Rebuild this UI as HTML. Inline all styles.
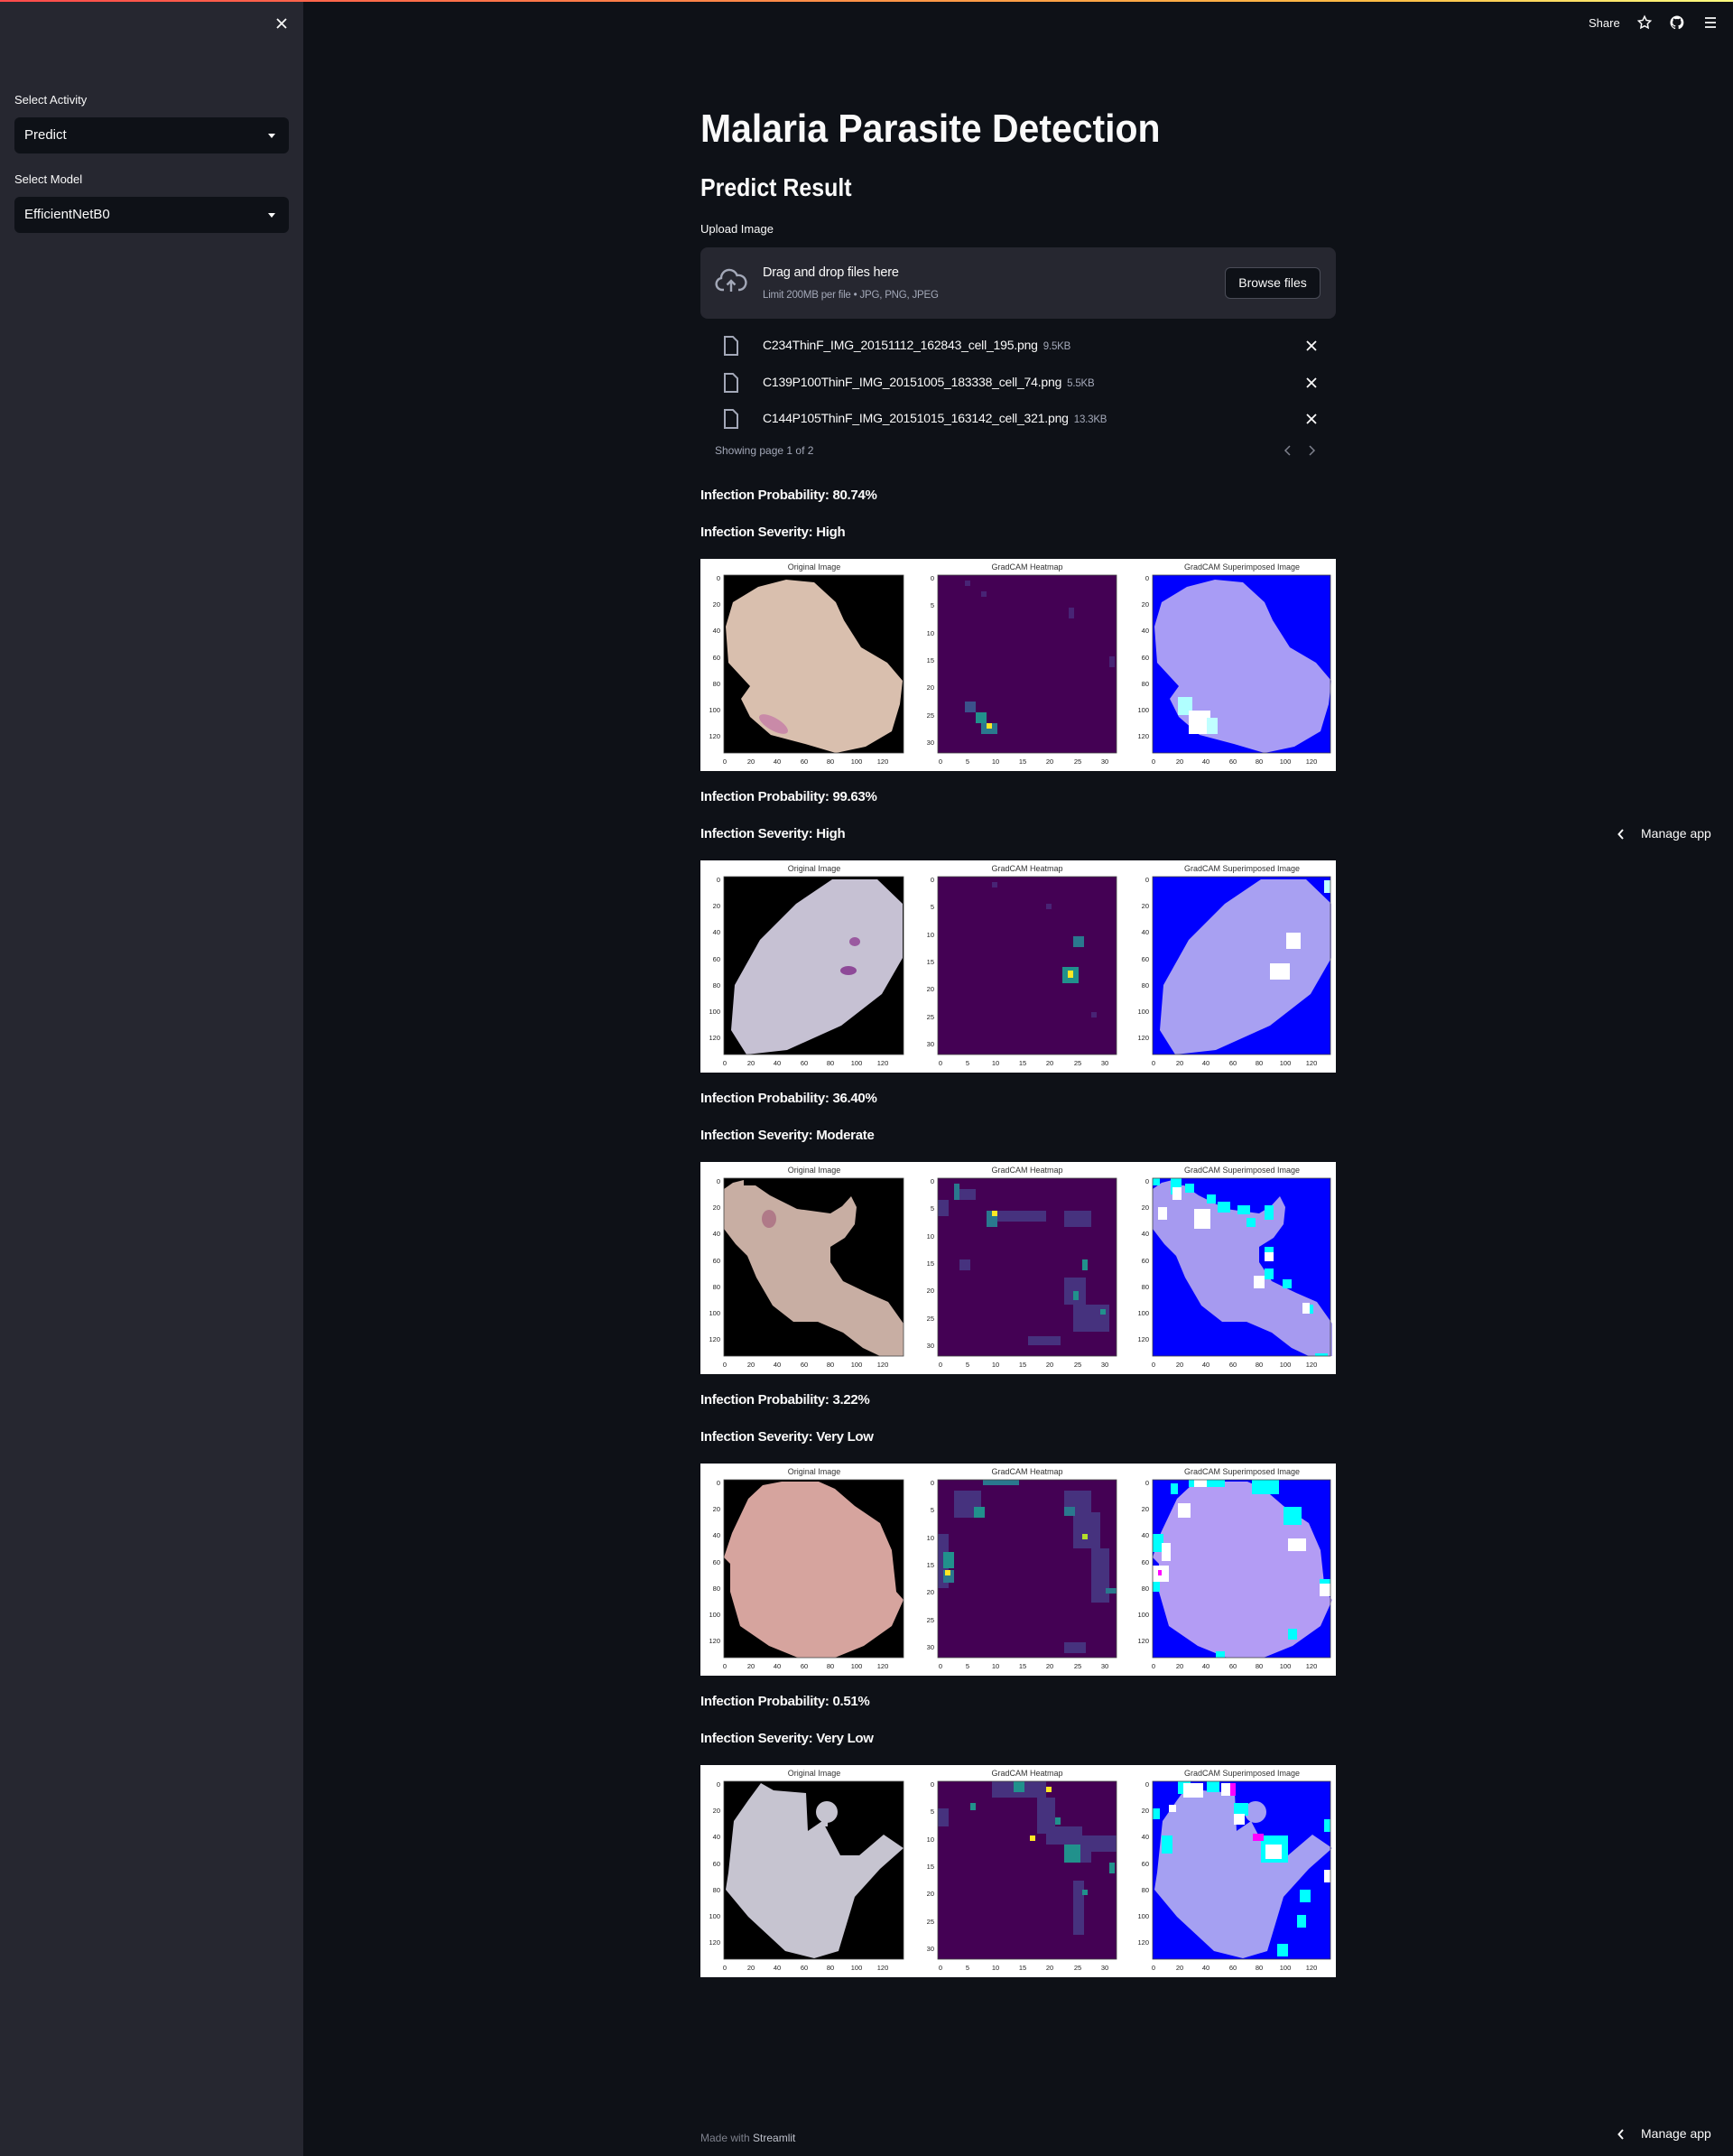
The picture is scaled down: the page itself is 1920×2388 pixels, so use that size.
<!DOCTYPE html>
<html><head><meta charset="utf-8">
<style>
*{margin:0;padding:0;box-sizing:border-box}
body{width:1920px;height:2388px;background:#0e1117;font-family:"Liberation Sans",sans-serif;color:#fafafa;position:relative;overflow:hidden}
.abs{position:absolute}
.bar{left:0;top:0;width:1920px;height:2px;background:linear-gradient(90deg,#ff4b4b,#ffbd45 80%,#fffd80)}
.side{left:0;top:2px;width:336px;height:2386px;background:#262730}
.lbl{font-size:13px;color:#fafafa}
.sel{left:16px;width:304px;height:40px;background:#0e1117;border-radius:6px;font-size:15px;padding-left:11px;line-height:40px}
.sel:after{content:"";position:absolute;right:15px;top:18px;border-left:4px solid transparent;border-right:4px solid transparent;border-top:5px solid #fafafa}
.sx{display:inline-block;transform-origin:0 0;white-space:nowrap}
.b{font-weight:bold;font-size:15px;letter-spacing:-0.3px}
.fn{font-size:14px;color:#fafafa;letter-spacing:-0.2px}
.fs{font-size:11.5px;color:#a3a8b8;margin-left:6px}
svg text{font-family:"Liberation Sans",sans-serif}
.tk text{font-size:7.5px;fill:#222}
</style></head><body>
<div class="abs bar"></div>
<div class="abs side"></div>
<svg class="abs" style="left:305px;top:19px" width="14" height="14" viewBox="0 0 14 14"><path d="M2 2L12 12M12 2L2 12" stroke="#fafafa" stroke-width="1.8"/></svg>
<div class="abs lbl" style="left:16px;top:103px">Select Activity</div>
<div class="abs sel" style="top:130px">Predict</div>
<div class="abs lbl" style="left:16px;top:191px">Select Model</div>
<div class="abs sel" style="top:218px">EfficientNetB0</div>

<!-- header -->
<div class="abs" style="left:1760px;top:18px;font-size:13px">Share</div>
<svg class="abs" style="left:1813px;top:16px" width="18" height="18" viewBox="0 0 24 24"><path d="M12 3l2.7 5.6 6.1.9-4.4 4.3 1 6.1L12 17l-5.4 2.9 1-6.1-4.4-4.3 6.1-.9z" fill="none" stroke="#fafafa" stroke-width="2"/></svg>
<svg class="abs" style="left:1849px;top:16px" width="18" height="18" viewBox="0 0 24 24"><path d="M12 2a10 10 0 0 0-3.2 19.5c.5.1.7-.2.7-.5v-1.7c-2.8.6-3.4-1.3-3.4-1.3-.5-1.2-1.100-1.5-1.100-1.5-.9-.6.1-.6.1-.6 1 .1 1.5 1 1.5 1 .9 1.5 2.3 1.100 2.9.8.1-.6.4-1.100.6-1.300-2.200-.3-4.600-1.100-4.600-5a3.9 3.9 0 0 1 1-2.700c-.1-.3-.4-1.300.1-2.700 0 0 .8-.3 2.700 1a9.4 9.4 0 0 1 5 0c1.900-1.300 2.700-1 2.700-1 .5 1.400.2 2.400.1 2.700a3.9 3.9 0 0 1 1 2.700c0 3.900-2.300 4.700-4.600 5 .4.3.7.9.7 1.900V21c0 .3.2.6.7.5A10 10 0 0 0 12 2z" fill="#fafafa"/></svg>
<svg class="abs" style="left:1887px;top:17px" width="16" height="16" viewBox="0 0 16 16"><path d="M2 3h12M2 8h12M2 13h12" stroke="#fafafa" stroke-width="1.8"/></svg>

<!-- main -->
<div class="abs sx" style="left:776px;top:118px;font-size:44px;font-weight:bold;transform:scaleX(0.93)">Malaria Parasite Detection</div>
<div class="abs sx" style="left:776px;top:192px;font-size:28px;font-weight:bold;transform:scaleX(0.89)">Predict Result</div>
<div class="abs lbl" style="left:776px;top:246px">Upload Image</div>

<div class="abs" style="left:776px;top:274px;width:704px;height:79px;background:#262730;border-radius:8px"></div>
<svg class="abs" style="left:792px;top:297px" width="36" height="30" viewBox="0 0 36 30"><path d="M10 24H8a6.5 6.5 0 0 1-1-12.9A9 9 0 0 1 24.5 8 7.5 7.5 0 0 1 28 24h-2" fill="none" stroke="#a3a8b8" stroke-width="2.4"/><path d="M18 26V14M13.5 18.5L18 14l4.5 4.5" fill="none" stroke="#a3a8b8" stroke-width="2.4"/></svg>
<div class="abs" style="left:845px;top:294px;font-size:14.5px;letter-spacing:-0.2px">Drag and drop files here</div>
<div class="abs" style="left:845px;top:321px;font-size:11.5px;color:#a3a8b8;letter-spacing:-0.2px">Limit 200MB per file • JPG, PNG, JPEG</div>
<div class="abs" style="left:1357px;top:296px;width:106px;height:35px;background:#0e1117;border:1px solid #4a4c57;border-radius:6px;font-size:14px;text-align:center;line-height:33px">Browse files</div>

<svg class="abs" style="left:801px;top:371px" width="18" height="24" viewBox="0 0 18 24"><path d="M2 2h9l5 5v15H2z" fill="none" stroke="#a3a8b8" stroke-width="2"/></svg>
<div class="abs fn" style="left:845px;top:374px">C234ThinF_IMG_20151112_162843_cell_195.png<span class="fs">9.5KB</span></div>
<svg class="abs" style="left:1446px;top:376px" width="14" height="14" viewBox="0 0 14 14"><path d="M2 2L12 12M12 2L2 12" stroke="#fafafa" stroke-width="1.8"/></svg>
<svg class="abs" style="left:801px;top:412px" width="18" height="24" viewBox="0 0 18 24"><path d="M2 2h9l5 5v15H2z" fill="none" stroke="#a3a8b8" stroke-width="2"/></svg>
<div class="abs fn" style="left:845px;top:415px">C139P100ThinF_IMG_20151005_183338_cell_74.png<span class="fs">5.5KB</span></div>
<svg class="abs" style="left:1446px;top:417px" width="14" height="14" viewBox="0 0 14 14"><path d="M2 2L12 12M12 2L2 12" stroke="#fafafa" stroke-width="1.8"/></svg>
<svg class="abs" style="left:801px;top:452px" width="18" height="24" viewBox="0 0 18 24"><path d="M2 2h9l5 5v15H2z" fill="none" stroke="#a3a8b8" stroke-width="2"/></svg>
<div class="abs fn" style="left:845px;top:455px">C144P105ThinF_IMG_20151015_163142_cell_321.png<span class="fs">13.3KB</span></div>
<svg class="abs" style="left:1446px;top:457px" width="14" height="14" viewBox="0 0 14 14"><path d="M2 2L12 12M12 2L2 12" stroke="#fafafa" stroke-width="1.8"/></svg>
<div class="abs" style="left:792px;top:492px;font-size:12px;color:#a3a8b8">Showing page 1 of 2</div>
<svg class="abs" style="left:1420px;top:492px" width="40" height="14" viewBox="0 0 40 14"><path d="M9 2L4 7l5 5M31 2l5 5-5 5" fill="none" stroke="#7d808c" stroke-width="1.5"/></svg>

<svg class="abs" style="left:1791px;top:917px" width="10" height="14" viewBox="0 0 10 14"><path d="M7 2L2.5 7 7 12" fill="none" stroke="#fafafa" stroke-width="2"/></svg>
<div class="abs" style="left:1818px;top:915px;font-size:14px">Manage app</div>
<svg class="abs" style="left:1791px;top:2357px" width="10" height="14" viewBox="0 0 10 14"><path d="M7 2L2.5 7 7 12" fill="none" stroke="#fafafa" stroke-width="2"/></svg>
<div class="abs" style="left:1818px;top:2355px;font-size:14px">Manage app</div>
<div class="abs" style="left:776px;top:2361px;font-size:12px;color:#7d808c">Made with <span style="color:#bfc2cc">Streamlit</span></div>

<!-- results -->
<div class="abs b" style="left:776px;top:540px">Infection Probability: 80.74%</div>
<div class="abs b" style="left:776px;top:581px">Infection Severity: High</div>
<div class="abs b" style="left:776px;top:874px">Infection Probability: 99.63%</div>
<div class="abs b" style="left:776px;top:915px">Infection Severity: High</div>
<div class="abs b" style="left:776px;top:1208px">Infection Probability: 36.40%</div>
<div class="abs b" style="left:776px;top:1249px">Infection Severity: Moderate</div>
<div class="abs b" style="left:776px;top:1542px">Infection Probability: 3.22%</div>
<div class="abs b" style="left:776px;top:1583px">Infection Severity: Very Low</div>
<div class="abs b" style="left:776px;top:1876px">Infection Probability: 0.51%</div>
<div class="abs b" style="left:776px;top:1917px">Infection Severity: Very Low</div>

<!-- FIG 1 -->
<svg class="abs" style="left:776px;top:619px" width="704" height="235" viewBox="0 0 704 235">
<rect width="704" height="235" fill="#fff"/>
<g font-size="9" fill="#333" text-anchor="middle"><text x="126" y="12">Original Image</text><text x="362" y="12">GradCAM Heatmap</text><text x="600" y="12">GradCAM Superimposed Image</text></g>
<g transform="translate(26,18)"><rect width="199" height="197" fill="#000"/><polygon fill="#d9bfae" points="69,5 100,8 124,30 133,50 152,80 181,97 198,117 195,143 186,173 157,190 124,197 90,187 52,177 29,157 19,137 29,123 5,97 2,57 10,30 38,13"/><ellipse cx="55" cy="165" rx="18" ry="7" fill="#c98aa8" transform="rotate(30 55 165)"/></g>
<g transform="translate(263,18)"><rect width="198" height="197" fill="#440154"/><g fill="#482475"><rect x="30" y="6" width="6" height="6"/><rect x="48" y="18" width="6" height="6"/><rect x="145" y="36" width="6" height="12"/><rect x="190" y="90" width="6" height="12"/></g><rect x="30" y="140" width="12" height="12" fill="#3b528b"/><rect x="42" y="152" width="12" height="12" fill="#21918c"/><rect x="48" y="164" width="18" height="12" fill="#2a788e"/><rect x="54" y="164" width="6" height="6" fill="#fde725"/></g>
<g transform="translate(501,18)"><rect width="197" height="197" fill="#0000ff"/><polygon fill="#a89cf5" points="69,5 100,8 124,30 133,50 152,80 181,97 198,117 195,143 186,173 157,190 124,197 90,187 52,177 29,157 19,137 29,123 5,97 2,57 10,30 38,13"/><rect x="28" y="135" width="16" height="20" fill="#b0ffff"/><rect x="40" y="150" width="24" height="26" fill="#ffffff"/><rect x="60" y="158" width="12" height="18" fill="#c0ffff"/></g>
<g fill="none" stroke="#444" stroke-width="0.8"><rect x="26" y="18" width="199" height="197"/><rect x="263" y="18" width="198" height="197"/><rect x="501" y="18" width="197" height="197"/></g>
<g class="tk" text-anchor="end"><text x="22" y="24">0</text><text x="22" y="53">20</text><text x="22" y="82">40</text><text x="22" y="112">60</text><text x="22" y="141">80</text><text x="22" y="170">100</text><text x="22" y="199">120</text>
<text x="259" y="24">0</text><text x="259" y="54">5</text><text x="259" y="85">10</text><text x="259" y="115">15</text><text x="259" y="145">20</text><text x="259" y="176">25</text><text x="259" y="206">30</text>
<text x="497" y="24">0</text><text x="497" y="53">20</text><text x="497" y="82">40</text><text x="497" y="112">60</text><text x="497" y="141">80</text><text x="497" y="170">100</text><text x="497" y="199">120</text></g>
<g class="tk" text-anchor="middle"><text x="27" y="227">0</text><text x="56" y="227">20</text><text x="85" y="227">40</text><text x="115" y="227">60</text><text x="144" y="227">80</text><text x="173" y="227">100</text><text x="202" y="227">120</text>
<text x="266" y="227">0</text><text x="296" y="227">5</text><text x="327" y="227">10</text><text x="357" y="227">15</text><text x="387" y="227">20</text><text x="418" y="227">25</text><text x="448" y="227">30</text>
<text x="502" y="227">0</text><text x="531" y="227">20</text><text x="560" y="227">40</text><text x="590" y="227">60</text><text x="619" y="227">80</text><text x="648" y="227">100</text><text x="677" y="227">120</text></g>
</svg>

<!-- FIG 2 -->
<svg class="abs" style="left:776px;top:953px" width="704" height="235" viewBox="0 0 704 235">
<rect width="704" height="235" fill="#fff"/>
<g font-size="9" fill="#333" text-anchor="middle"><text x="126" y="12">Original Image</text><text x="362" y="12">GradCAM Heatmap</text><text x="600" y="12">GradCAM Superimposed Image</text></g>
<g transform="translate(26,18)"><rect width="199" height="197" fill="#000"/><polygon fill="#c6c1d3" points="120,3 170,3 198,30 198,90 175,130 130,165 70,192 25,197 8,170 12,120 40,70 80,30"/><ellipse cx="145" cy="72" rx="6" ry="5" fill="#9a5aa0"/><ellipse cx="138" cy="104" rx="9" ry="5" fill="#8e4a98"/></g>
<g transform="translate(263,18)"><rect width="198" height="197" fill="#440154"/><g fill="#482475"><rect x="60" y="6" width="6" height="6"/><rect x="120" y="30" width="6" height="6"/><rect x="170" y="150" width="6" height="6"/></g><rect x="150" y="66" width="12" height="12" fill="#2a788e"/><rect x="138" y="100" width="18" height="18" fill="#21918c"/><rect x="144" y="104" width="6" height="8" fill="#fde725"/></g>
<g transform="translate(501,18)"><rect width="197" height="197" fill="#0000ff"/><polygon fill="#a8a0f2" points="120,3 170,3 198,30 198,90 175,130 130,165 70,192 25,197 8,170 12,120 40,70 80,30"/><rect x="148" y="62" width="16" height="18" fill="#fff"/><rect x="130" y="96" width="22" height="18" fill="#fff"/><rect x="190" y="4" width="7" height="14" fill="#bfffff"/></g>
<g fill="none" stroke="#444" stroke-width="0.8"><rect x="26" y="18" width="199" height="197"/><rect x="263" y="18" width="198" height="197"/><rect x="501" y="18" width="197" height="197"/></g>
<g class="tk" text-anchor="end"><text x="22" y="24">0</text><text x="22" y="53">20</text><text x="22" y="82">40</text><text x="22" y="112">60</text><text x="22" y="141">80</text><text x="22" y="170">100</text><text x="22" y="199">120</text>
<text x="259" y="24">0</text><text x="259" y="54">5</text><text x="259" y="85">10</text><text x="259" y="115">15</text><text x="259" y="145">20</text><text x="259" y="176">25</text><text x="259" y="206">30</text>
<text x="497" y="24">0</text><text x="497" y="53">20</text><text x="497" y="82">40</text><text x="497" y="112">60</text><text x="497" y="141">80</text><text x="497" y="170">100</text><text x="497" y="199">120</text></g>
<g class="tk" text-anchor="middle"><text x="27" y="227">0</text><text x="56" y="227">20</text><text x="85" y="227">40</text><text x="115" y="227">60</text><text x="144" y="227">80</text><text x="173" y="227">100</text><text x="202" y="227">120</text>
<text x="266" y="227">0</text><text x="296" y="227">5</text><text x="327" y="227">10</text><text x="357" y="227">15</text><text x="387" y="227">20</text><text x="418" y="227">25</text><text x="448" y="227">30</text>
<text x="502" y="227">0</text><text x="531" y="227">20</text><text x="560" y="227">40</text><text x="590" y="227">60</text><text x="619" y="227">80</text><text x="648" y="227">100</text><text x="677" y="227">120</text></g>
</svg>

<!-- FIG 3 -->
<svg class="abs" style="left:776px;top:1287px" width="704" height="235" viewBox="0 0 704 235">
<rect width="704" height="235" fill="#fff"/>
<g font-size="9" fill="#333" text-anchor="middle"><text x="126" y="12">Original Image</text><text x="362" y="12">GradCAM Heatmap</text><text x="600" y="12">GradCAM Superimposed Image</text></g>
<g transform="translate(26,18)"><rect width="199" height="197" fill="#000"/><polygon fill="#c8aea3" points="0,12 10,5 22,2 22,8 35,8 51,19 81,34 118,39 131,31 141,20 147,32 145,51 134,66 118,76 118,93 132,114 159,127 182,137 199,161 199,197 173,197 154,188 132,171 104,159 77,159 54,141 36,110 26,86 13,73 0,56"/><ellipse cx="50" cy="45" rx="8" ry="10" fill="#b07a88"/></g>
<g transform="translate(263,18)"><rect width="198" height="197" fill="#440154"/><g fill="#46327e"><rect x="0" y="24" width="12" height="18"/><rect x="18" y="12" width="24" height="12"/><rect x="60" y="36" width="60" height="12"/><rect x="140" y="36" width="30" height="18"/><rect x="24" y="90" width="12" height="12"/><rect x="140" y="110" width="24" height="30"/><rect x="150" y="140" width="40" height="30"/><rect x="100" y="175" width="36" height="10"/></g><rect x="18" y="6" width="6" height="18" fill="#2a788e"/><rect x="54" y="36" width="12" height="18" fill="#2a788e"/><rect x="60" y="36" width="6" height="6" fill="#fde725"/><rect x="160" y="90" width="6" height="12" fill="#21918c"/><rect x="150" y="125" width="6" height="10" fill="#21918c"/><rect x="180" y="145" width="6" height="6" fill="#21918c"/></g>
<g transform="translate(501,18)"><rect width="197" height="197" fill="#0000ff"/><polygon fill="#a69af0" points="0,12 10,5 22,2 22,8 35,8 51,19 81,34 118,39 131,31 141,20 147,32 145,51 134,66 118,76 118,93 132,114 159,127 182,137 199,161 199,197 173,197 154,188 132,171 104,159 77,159 54,141 36,110 26,86 13,73 0,56"/><g fill="#00ffff"><rect x="0" y="0" width="8" height="8"/><rect x="20" y="0" width="12" height="18"/><rect x="36" y="6" width="10" height="10"/><rect x="60" y="18" width="10" height="10"/><rect x="72" y="26" width="14" height="12"/><rect x="94" y="30" width="14" height="10"/><rect x="124" y="30" width="10" height="16"/><rect x="104" y="44" width="10" height="10"/><rect x="124" y="76" width="10" height="14"/><rect x="124" y="100" width="10" height="12"/><rect x="144" y="112" width="10" height="10"/><rect x="168" y="140" width="10" height="10"/><rect x="180" y="194" width="14" height="3"/></g><g fill="#fff"><rect x="6" y="32" width="10" height="14"/><rect x="22" y="10" width="10" height="14"/><rect x="46" y="34" width="18" height="22"/><rect x="124" y="82" width="10" height="10"/><rect x="112" y="108" width="12" height="14"/><rect x="166" y="138" width="8" height="12"/></g></g>
<g fill="none" stroke="#444" stroke-width="0.8"><rect x="26" y="18" width="199" height="197"/><rect x="263" y="18" width="198" height="197"/><rect x="501" y="18" width="197" height="197"/></g>
<g class="tk" text-anchor="end"><text x="22" y="24">0</text><text x="22" y="53">20</text><text x="22" y="82">40</text><text x="22" y="112">60</text><text x="22" y="141">80</text><text x="22" y="170">100</text><text x="22" y="199">120</text>
<text x="259" y="24">0</text><text x="259" y="54">5</text><text x="259" y="85">10</text><text x="259" y="115">15</text><text x="259" y="145">20</text><text x="259" y="176">25</text><text x="259" y="206">30</text>
<text x="497" y="24">0</text><text x="497" y="53">20</text><text x="497" y="82">40</text><text x="497" y="112">60</text><text x="497" y="141">80</text><text x="497" y="170">100</text><text x="497" y="199">120</text></g>
<g class="tk" text-anchor="middle"><text x="27" y="227">0</text><text x="56" y="227">20</text><text x="85" y="227">40</text><text x="115" y="227">60</text><text x="144" y="227">80</text><text x="173" y="227">100</text><text x="202" y="227">120</text>
<text x="266" y="227">0</text><text x="296" y="227">5</text><text x="327" y="227">10</text><text x="357" y="227">15</text><text x="387" y="227">20</text><text x="418" y="227">25</text><text x="448" y="227">30</text>
<text x="502" y="227">0</text><text x="531" y="227">20</text><text x="560" y="227">40</text><text x="590" y="227">60</text><text x="619" y="227">80</text><text x="648" y="227">100</text><text x="677" y="227">120</text></g>
</svg>

<!-- FIG 4 -->
<svg class="abs" style="left:776px;top:1621px" width="704" height="235" viewBox="0 0 704 235">
<rect width="704" height="235" fill="#fff"/>
<g font-size="9" fill="#333" text-anchor="middle"><text x="126" y="12">Original Image</text><text x="362" y="12">GradCAM Heatmap</text><text x="600" y="12">GradCAM Superimposed Image</text></g>
<g transform="translate(26,18)"><rect width="199" height="197" fill="#000"/><polygon fill="#d6a49e" points="43,6 64,2 105,2 123,10 145,29 173,48 186,78 191,124 199,133 186,162 155,184 123,197 82,197 50,184 18,162 7,124 7,93 0,86 9,59 18,40 27,21"/></g>
<g transform="translate(263,18)"><rect width="198" height="197" fill="#440154"/><g fill="#46327e"><rect x="18" y="12" width="30" height="30"/><rect x="140" y="12" width="30" height="24"/><rect x="150" y="36" width="30" height="40"/><rect x="170" y="76" width="20" height="60"/><rect x="0" y="60" width="12" height="60"/><rect x="140" y="180" width="24" height="12"/></g><rect x="40" y="30" width="12" height="12" fill="#21918c"/><rect x="6" y="80" width="12" height="18" fill="#21918c"/><rect x="6" y="100" width="12" height="14" fill="#2a788e"/><rect x="8" y="100" width="6" height="6" fill="#fde725"/><rect x="160" y="60" width="6" height="6" fill="#b5de2b"/><rect x="140" y="30" width="12" height="10" fill="#2a788e"/><rect x="50" y="0" width="40" height="6" fill="#2a788e"/><rect x="186" y="120" width="12" height="6" fill="#2a788e"/></g>
<g transform="translate(501,18)"><rect width="197" height="197" fill="#0000ff"/><polygon fill="#b39cf4" points="43,6 64,2 105,2 123,10 145,29 173,48 186,78 191,124 199,133 186,162 155,184 123,197 82,197 50,184 18,162 7,124 7,93 0,86 9,59 18,40 27,21"/><g fill="#00ffff"><rect x="20" y="4" width="8" height="12"/><rect x="40" y="0" width="40" height="8"/><rect x="110" y="0" width="30" height="16"/><rect x="0" y="60" width="12" height="20"/><rect x="0" y="110" width="8" height="14"/><rect x="145" y="30" width="20" height="20"/><rect x="185" y="110" width="12" height="10"/><rect x="150" y="165" width="10" height="12"/><rect x="70" y="190" width="10" height="7"/></g><g fill="#fff"><rect x="28" y="26" width="14" height="16"/><rect x="10" y="70" width="10" height="20"/><rect x="0" y="95" width="18" height="18"/><rect x="150" y="65" width="20" height="14"/><rect x="185" y="115" width="12" height="14"/><rect x="46" y="0" width="14" height="8"/></g><rect x="6" y="100" width="4" height="6" fill="#ff00ff"/></g>
<g fill="none" stroke="#444" stroke-width="0.8"><rect x="26" y="18" width="199" height="197"/><rect x="263" y="18" width="198" height="197"/><rect x="501" y="18" width="197" height="197"/></g>
<g class="tk" text-anchor="end"><text x="22" y="24">0</text><text x="22" y="53">20</text><text x="22" y="82">40</text><text x="22" y="112">60</text><text x="22" y="141">80</text><text x="22" y="170">100</text><text x="22" y="199">120</text>
<text x="259" y="24">0</text><text x="259" y="54">5</text><text x="259" y="85">10</text><text x="259" y="115">15</text><text x="259" y="145">20</text><text x="259" y="176">25</text><text x="259" y="206">30</text>
<text x="497" y="24">0</text><text x="497" y="53">20</text><text x="497" y="82">40</text><text x="497" y="112">60</text><text x="497" y="141">80</text><text x="497" y="170">100</text><text x="497" y="199">120</text></g>
<g class="tk" text-anchor="middle"><text x="27" y="227">0</text><text x="56" y="227">20</text><text x="85" y="227">40</text><text x="115" y="227">60</text><text x="144" y="227">80</text><text x="173" y="227">100</text><text x="202" y="227">120</text>
<text x="266" y="227">0</text><text x="296" y="227">5</text><text x="327" y="227">10</text><text x="357" y="227">15</text><text x="387" y="227">20</text><text x="418" y="227">25</text><text x="448" y="227">30</text>
<text x="502" y="227">0</text><text x="531" y="227">20</text><text x="560" y="227">40</text><text x="590" y="227">60</text><text x="619" y="227">80</text><text x="648" y="227">100</text><text x="677" y="227">120</text></g>
</svg>

<!-- FIG 5 -->
<svg class="abs" style="left:776px;top:1955px" width="704" height="235" viewBox="0 0 704 235">
<rect width="704" height="235" fill="#fff"/>
<g font-size="9" fill="#333" text-anchor="middle"><text x="126" y="12">Original Image</text><text x="362" y="12">GradCAM Heatmap</text><text x="600" y="12">GradCAM Superimposed Image</text></g>
<g transform="translate(26,18)"><rect width="199" height="197" fill="#000"/><polygon fill="#c6c4d0" points="41,2 55,10 91,13 93,55 109,44 129,82 150,82 177,59 199,74 173,97 145,128 127,188 100,196 68,188 27,150 2,120 5,101 11,44 27,21"/><circle cx="114" cy="34" r="12" fill="#c6c4d0"/><rect x="109" y="34" width="6" height="16" fill="#c6c4d0"/></g>
<g transform="translate(263,18)"><rect width="198" height="197" fill="#440154"/><g fill="#46327e"><rect x="60" y="0" width="60" height="18"/><rect x="110" y="18" width="20" height="40"/><rect x="120" y="50" width="40" height="20"/><rect x="140" y="60" width="30" height="30"/><rect x="170" y="60" width="28" height="18"/><rect x="150" y="110" width="12" height="60"/><rect x="0" y="30" width="12" height="20"/></g><g fill="#21918c"><rect x="36" y="24" width="6" height="8"/><rect x="84" y="0" width="12" height="12"/><rect x="130" y="40" width="6" height="8"/><rect x="140" y="70" width="18" height="20"/><rect x="190" y="90" width="6" height="12"/><rect x="160" y="120" width="6" height="6"/></g><rect x="120" y="6" width="6" height="6" fill="#fde725"/><rect x="102" y="60" width="6" height="6" fill="#fde725"/></g>
<g transform="translate(501,18)"><rect width="197" height="197" fill="#0000ff"/><polygon fill="#a5a0f2" points="41,2 55,10 91,13 93,55 109,44 129,82 150,82 177,59 199,74 173,97 145,128 127,188 100,196 68,188 27,150 2,120 5,101 11,44 27,21"/><circle cx="114" cy="34" r="12" fill="#a5a0f2"/><g fill="#00ffff"><rect x="28" y="0" width="14" height="14"/><rect x="60" y="0" width="14" height="12"/><rect x="0" y="30" width="8" height="12"/><rect x="10" y="60" width="12" height="20"/><rect x="90" y="24" width="16" height="14"/><rect x="120" y="60" width="30" height="30"/><rect x="190" y="42" width="7" height="14"/><rect x="163" y="120" width="12" height="14"/><rect x="160" y="148" width="10" height="14"/><rect x="138" y="180" width="12" height="14"/></g><g fill="#fff"><rect x="34" y="2" width="22" height="16"/><rect x="76" y="2" width="12" height="14"/><rect x="90" y="36" width="12" height="12"/><rect x="125" y="70" width="18" height="16"/><rect x="18" y="26" width="8" height="8"/><rect x="190" y="98" width="7" height="14"/></g><rect x="86" y="2" width="6" height="14" fill="#ff00ff"/><rect x="111" y="58" width="12" height="8" fill="#ff00ff"/></g>
<g fill="none" stroke="#444" stroke-width="0.8"><rect x="26" y="18" width="199" height="197"/><rect x="263" y="18" width="198" height="197"/><rect x="501" y="18" width="197" height="197"/></g>
<g class="tk" text-anchor="end"><text x="22" y="24">0</text><text x="22" y="53">20</text><text x="22" y="82">40</text><text x="22" y="112">60</text><text x="22" y="141">80</text><text x="22" y="170">100</text><text x="22" y="199">120</text>
<text x="259" y="24">0</text><text x="259" y="54">5</text><text x="259" y="85">10</text><text x="259" y="115">15</text><text x="259" y="145">20</text><text x="259" y="176">25</text><text x="259" y="206">30</text>
<text x="497" y="24">0</text><text x="497" y="53">20</text><text x="497" y="82">40</text><text x="497" y="112">60</text><text x="497" y="141">80</text><text x="497" y="170">100</text><text x="497" y="199">120</text></g>
<g class="tk" text-anchor="middle"><text x="27" y="227">0</text><text x="56" y="227">20</text><text x="85" y="227">40</text><text x="115" y="227">60</text><text x="144" y="227">80</text><text x="173" y="227">100</text><text x="202" y="227">120</text>
<text x="266" y="227">0</text><text x="296" y="227">5</text><text x="327" y="227">10</text><text x="357" y="227">15</text><text x="387" y="227">20</text><text x="418" y="227">25</text><text x="448" y="227">30</text>
<text x="502" y="227">0</text><text x="531" y="227">20</text><text x="560" y="227">40</text><text x="590" y="227">60</text><text x="619" y="227">80</text><text x="648" y="227">100</text><text x="677" y="227">120</text></g>
</svg>
</body></html>
